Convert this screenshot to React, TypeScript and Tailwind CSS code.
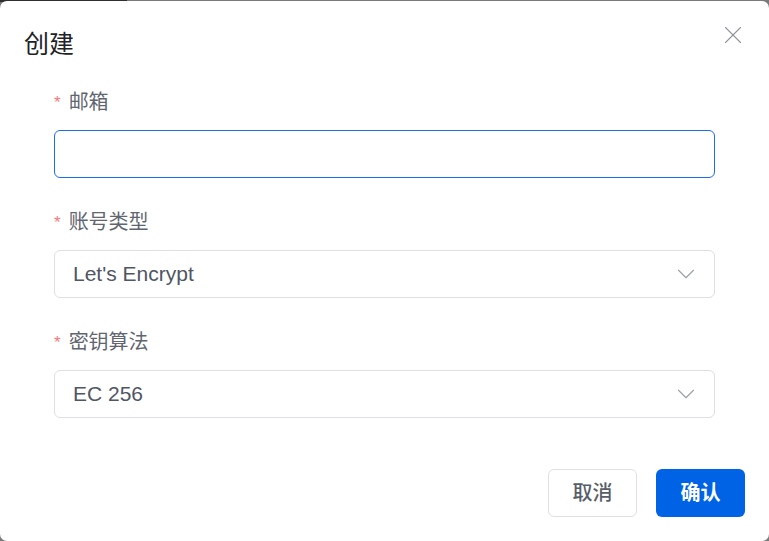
import { X, ChevronDown } from 'lucide-react'

function Label({ text }: { text: string }) {
  return (
    <div className="flex h-[24px] items-center text-[20px] leading-none text-[#5f6670]">
      <span className="mr-[8px] text-[17px] text-[#f77a76]">*</span>
      {text}
    </div>
  )
}

function SelectBox({ value }: { value: string }) {
  return (
    <div className="mt-[16px] flex h-[48px] items-center justify-between rounded-[6px] border border-[#dcdfe6] pl-[18px] pr-[13px]">
      <span className="text-[21px] text-[#505663]">{value}</span>
      <ChevronDown size={30} className="text-[#9aa0aa]" strokeWidth={0.9} />
    </div>
  )
}

export default function App() {
  return (
    <div
      className="relative h-[541px] w-[769px] overflow-hidden bg-[#7a7a7a]"
      style={{ fontFamily: '"Liberation Sans", "Noto Sans CJK SC", sans-serif' }}
    >
      <div className="absolute left-0 top-0 h-[2px] w-[127px] bg-[#2e2e2e]" />
      <div className="relative mt-px flex h-[540px] flex-col rounded-[7px] bg-white">
        {/* Header */}
        <div className="flex h-[56px] items-start justify-between pl-[24px] pr-[21px] pt-[30px]">
          <h2 className="text-[25px] leading-[26px] text-[#1f2329]">创建</h2>
          <X size={30} className="mt-[-11px] text-[#8f959e]" strokeWidth={0.9} />
        </div>

        {/* Form */}
        <div className="mt-[33px] flex flex-col pl-[54px] pr-[54px]">
          <Label text="邮箱" />
          <div className="mt-[16px] h-[48px] rounded-[6px] border-[1.5px] border-[#1a6cf0]" />

          <div className="mt-[32px]">
            <Label text="账号类型" />
          </div>
          <SelectBox value="Let's Encrypt" />

          <div className="mt-[32px]">
            <Label text="密钥算法" />
          </div>
          <SelectBox value="EC 256" />
        </div>

        {/* Footer */}
        <div className="mt-[51px] flex justify-end gap-[19px] pr-[24px]">
          <button className="h-[48px] w-[89px] rounded-[6px] border border-[#dee0e3] bg-white text-[20px] font-medium text-[#585e69]">
            取消
          </button>
          <button className="h-[48px] w-[89px] rounded-[6px] bg-[#0063e6] text-[20px] font-bold text-white">
            确认
          </button>
        </div>
      </div>
    </div>
  )
}
